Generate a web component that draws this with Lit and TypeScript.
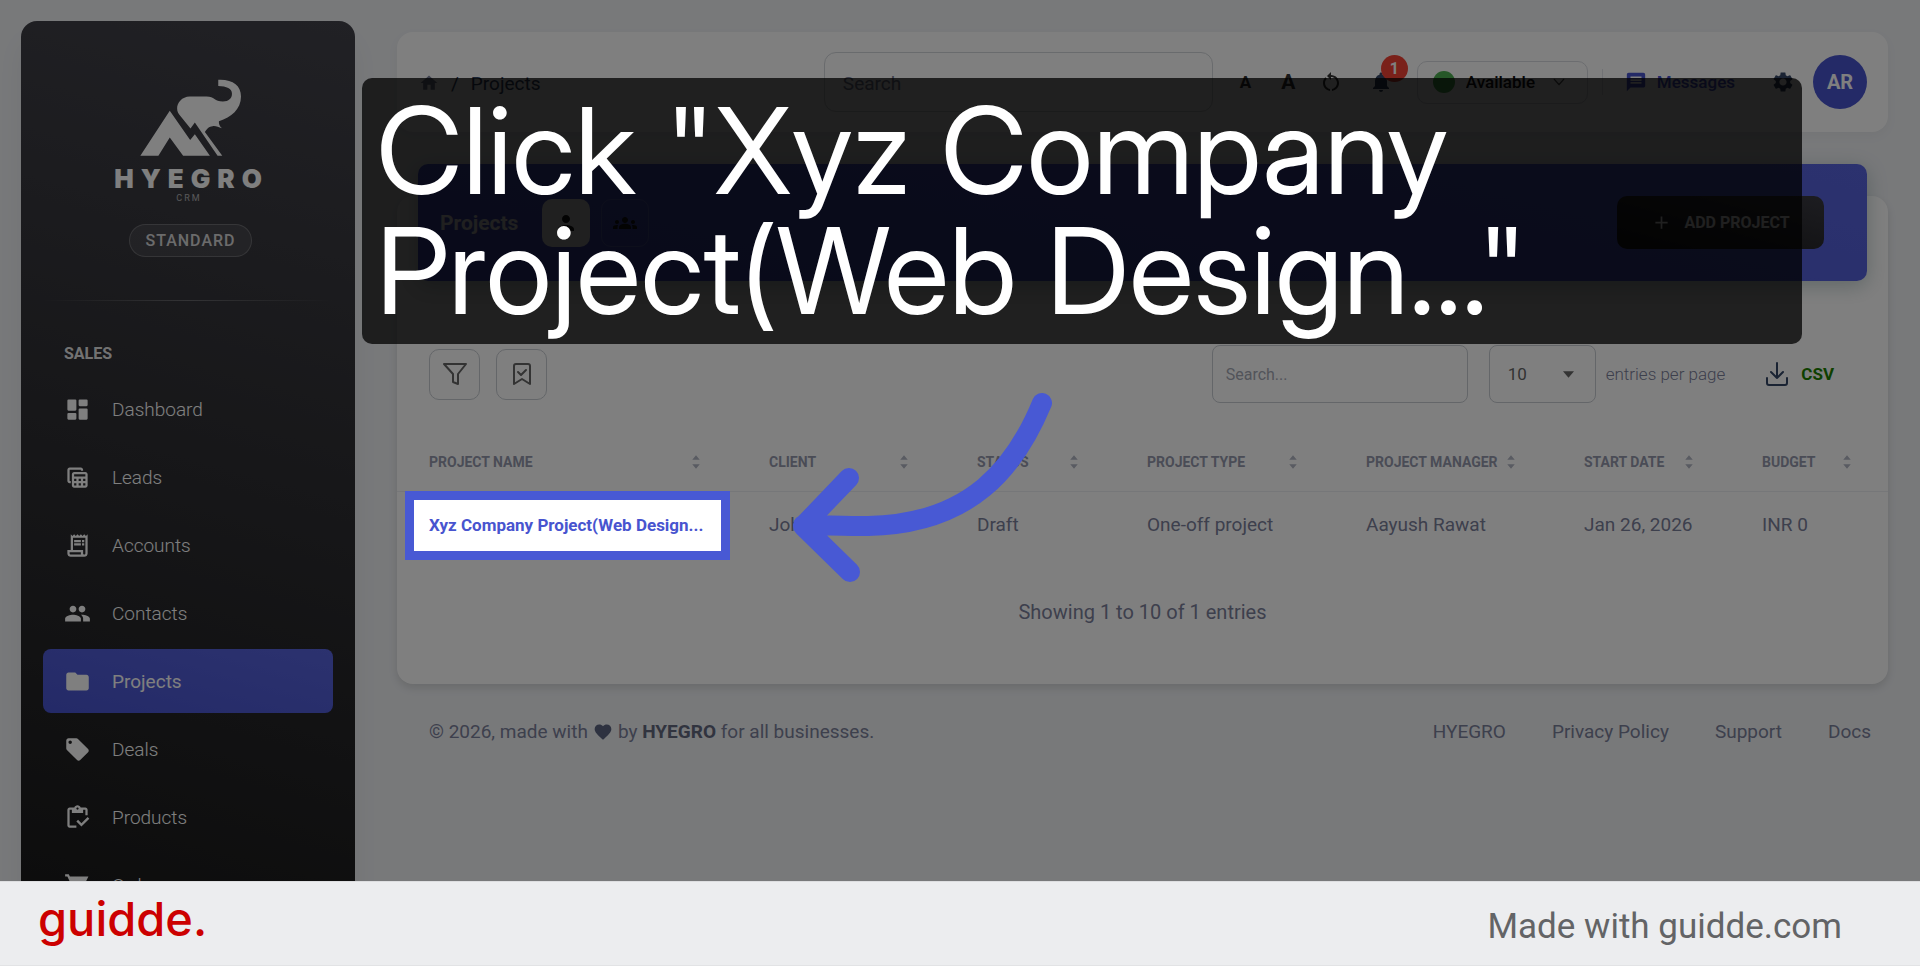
import { LitElement, html, css, svg } from "lit";
import { customElement } from "lit/decorators.js";
import { classMap } from "lit/directives/class-map.js";

const paths = {
  dashboard: svg`<path d="M4 3h6a1 1 0 0 1 1 1v8a1 1 0 0 1-1 1H4a1 1 0 0 1-1-1V4a1 1 0 0 1 1-1zm0 12h6a1 1 0 0 1 1 1v4a1 1 0 0 1-1 1H4a1 1 0 0 1-1-1v-4a1 1 0 0 1 1-1zm10-4h6a1 1 0 0 1 1 1v8a1 1 0 0 1-1 1h-6a1 1 0 0 1-1-1v-8a1 1 0 0 1 1-1zm0-8h6a1 1 0 0 1 1 1v4a1 1 0 0 1-1 1h-6a1 1 0 0 1-1-1V4a1 1 0 0 1 1-1z"/>`,
  leads: svg`<path fill-rule="evenodd" d="M19 7H9c-1.100 0-2 .9-2 2v10c0 1.100.9 2 2 2h10c1.100 0 2-.9 2-2V9c0-1.100-.9-2-2-2zm0 2v2H9V9h10zm-6 6v-2h2v2h-2zm2 2v2h-2v-2h2zm-4-2H9v-2h2v2zm6-2h2v2h-2v-2zm-8 4h2v2H9v-2zm8 2v-2h2v2h-2zM6 17H5c-1.100 0-2-.9-2-2V5c0-1.100.9-2 2-2h10c1.100 0 2 .9 2 2v1h-2V5H5v10h1v2z"/>`,
  accounts: svg`<path fill-rule="evenodd" d="M19.500 3.500 18 2l-1.500 1.500L15 2l-1.500 1.500L12 2l-1.500 1.500L9 2 7.500 3.500 6 2v14H3v3c0 1.660 1.340 3 3 3h12c1.660 0 3-1.340 3-3V2l-1.500 1.500zM15 20H6c-.55 0-1-.45-1-1v-1h10v2zm4-1c0 .55-.45 1-1 1s-1-.45-1-1v-3H8V5h11v14z"/><path d="M9 7h6v2H9zM16 7h2v2h-2zM9 10h6v2H9zM16 10h2v2h-2z"/>`,
  contacts: svg`<path d="M16 11c1.660 0 2.990-1.340 2.990-3S17.660 5 16 5c-1.660 0-3 1.340-3 3s1.340 3 3 3zm-8 0c1.660 0 2.990-1.340 2.990-3S9.660 5 8 5C6.340 5 5 6.340 5 8s1.340 3 3 3zm0 2c-2.330 0-7 1.170-7 3.500V19h14v-2.500c0-2.330-4.670-3.500-7-3.500zm8 0c-.29 0-.62.02-.97.05 1.160.84 1.970 1.970 1.970 3.450V19h6v-2.500c0-2.330-4.670-3.500-7-3.500z"/>`,
  projects: svg`<path d="M10 4H4c-1.100 0-1.990.9-1.990 2L2 18c0 1.100.9 2 2 2h16c1.100 0 2-.9 2-2V8c0-1.100-.9-2-2-2h-8l-2-2z"/>`,
  deals: svg`<path d="m21.410 11.580-9-9C12.050 2.220 11.550 2 11 2H4c-1.100 0-2 .9-2 2v7c0 .55.22 1.050.59 1.420l9 9c.36.36.86.58 1.410.58s1.050-.22 1.410-.59l7-7c.37-.36.59-.86.59-1.410s-.23-1.060-.59-1.420zM5.500 7C4.670 7 4 6.330 4 5.500S4.670 4 5.500 4 7 4.670 7 5.500 6.330 7 5.500 7z"/>`,
  products: svg`<path d="M5 5h2v3h10V5h2v5h2V5c0-1.100-.9-2-2-2h-4.180C14.400 1.840 13.300 1 12 1s-2.400.84-2.820 2H5c-1.100 0-2 .9-2 2v14c0 1.100.9 2 2 2h6v-2H5V5zm7-2c.55 0 1 .45 1 1s-.45 1-1 1-1-.45-1-1 .45-1 1-1z"/><path d="M21 11.500 15.510 17l-3.010-3-1.500 1.500 4.510 4.500L22.500 13z"/>`,
  orders: svg`<path d="M7 18c-1.100 0-1.990.9-1.990 2S5.900 22 7 22s2-.9 2-2-.9-2-2-2zM1 2v2h2l3.600 7.590-1.350 2.450C4.520 15.370 5.480 17 7 17h12v-2H7.420l1.130-2h7.450c.75 0 1.410-.41 1.750-1.030L21.700 4H5.210l-.94-2H1zm16 16c-1.100 0-1.990.9-1.990 2s.89 2 1.990 2 2-.9 2-2-.9-2-2-2z"/>`,
  home: svg`<path d="M10 20v-6h4v6h5v-8h3L12 3 2 12h3v8z"/>`,
  restart: svg`<path d="M12 5V2L8 6l4 4V7c3.310 0 6 2.690 6 6 0 2.970-2.170 5.430-5 5.910v2.020c3.950-.49 7-3.850 7-7.930 0-4.420-3.580-8-8-8zM6 13c0-1.650.67-3.150 1.760-4.240L6.340 7.340C4.900 8.790 4 10.790 4 13c0 4.080 3.050 7.440 7 7.930v-2.020c-2.830-.48-5-2.940-5-5.910z"/>`,
  bell: svg`<path d="M12 22c1.100 0 2-.9 2-2h-4c0 1.100.89 2 2 2zm6-6v-5c0-3.070-1.640-5.640-4.500-6.320V4c0-.83-.67-1.500-1.500-1.500s-1.500.67-1.500 1.500v.68C7.630 5.360 6 7.920 6 11v5l-2 2v1h16v-1l-2-2z"/>`,
  chat: svg`<path d="M20 2H4c-1.100 0-2 .9-2 2v18l4-4h14c1.100 0 2-.9 2-2V4c0-1.100-.9-2-2-2zm-2 12H6v-2h12v2zm0-3H6V9h12v2zm0-3H6V6h12v2z"/>`,
  gear: svg`<path d="M19.140 12.940c.04-.3.06-.61.06-.94 0-.32-.02-.64-.07-.94l2.030-1.580c.18-.14.23-.41.12-.61l-1.920-3.320c-.12-.22-.37-.29-.59-.22l-2.390.96c-.5-.38-1.030-.7-1.620-.94l-.36-2.540c-.04-.24-.24-.41-.48-.41h-3.840c-.24 0-.43.17-.47.41l-.36 2.540c-.59.24-1.130.57-1.620.94l-2.390-.96c-.22-.08-.47 0-.59.22L2.740 8.870c-.12.21-.08.47.12.61l2.030 1.580c-.05.3-.09.63-.09.94s.02.64.07.94l-2.030 1.580c-.18.14-.23.41-.12.61l1.920 3.320c.12.22.37.29.59.22l2.390-.96c.5.38 1.030.7 1.620.94l.36 2.540c.05.24.24.41.48.41h3.840c.24 0 .44-.17.47-.41l.36-2.540c.59-.24 1.130-.56 1.620-.94l2.390.96c.22.08.47 0 .59-.22l1.920-3.320c.12-.22.07-.47-.12-.61l-2.010-1.580zM12 15.600c-1.980 0-3.600-1.620-3.600-3.600s1.620-3.600 3.600-3.600 3.600 1.620 3.600 3.600-1.620 3.600-3.600 3.600z"/>`,
  person: svg`<path d="M12 12c2.210 0 4-1.790 4-4s-1.790-4-4-4-4 1.790-4 4 1.790 4 4 4zm0 2c-2.670 0-8 1.340-8 4v2h16v-2c0-2.660-5.330-4-8-4z"/>`,
  groups: svg`<path d="M12 12.750c1.630 0 3.070.39 4.240.9 1.080.48 1.760 1.560 1.760 2.730V18H6v-1.610c0-1.180.68-2.260 1.760-2.730 1.170-.52 2.610-.91 4.240-.91zM4 13c1.100 0 2-.9 2-2s-.9-2-2-2-2 .9-2 2 .9 2 2 2zm1.130 1.100C4.760 14.040 4.390 14 4 14c-.99 0-1.930.21-2.780.58C.48 14.900 0 15.620 0 16.430V18h4.500v-1.610c0-.83.23-1.610.63-2.290zM20 13c1.100 0 2-.9 2-2s-.9-2-2-2-2 .9-2 2 .9 2 2 2zm4 3.430c0-.81-.48-1.530-1.220-1.850-.85-.37-1.790-.58-2.780-.58-.39 0-.76.04-1.130.1.400.68.63 1.460.63 2.290V18H24v-1.570zM12 6c1.660 0 3 1.340 3 3s-1.340 3-3 3-3-1.340-3-3 1.340-3 3-3z"/>`,
  plus: svg`<path d="M19 13h-6v6h-2v-6H5v-2h6V5h2v6h6z"/>`,
  heart: svg`<path d="m12 21.350-1.450-1.320C5.400 15.360 2 12.280 2 8.500 2 5.420 4.420 3 7.500 3c1.740 0 3.410.81 4.500 2.090C13.090 3.810 14.760 3 16.500 3 19.580 3 22 5.420 22 8.500c0 3.780-3.400 6.860-8.550 11.540L12 21.350z"/>`,
  sort: svg`<path d="M7 9l5-6 5 6zM7 15l5 6 5-6z"/>`,
  caret: svg`<path d="M5 8h14l-7 8z"/>`,
};

const lines = {
  chevron: svg`<path d="M5 8l7 8 7-8"/>`,
  filter: svg`<path d="M1 2h22l-8 10v10l-5-2v-8z"/>`,
  bookmark: svg`<path d="M4 22V4a2 2 0 0 1 2-2h12a2 2 0 0 1 2 2v18l-8-5z"/><path d="m8 10 3 3 5-5"/>`,
  download: svg`<path d="M12 1v15M6 10l6 6 6-6M2 16v5a2 2 0 0 0 2 2h16a2 2 0 0 0 2-2v-5"/>`,
};

const icon = (name: keyof typeof paths) =>
  html`<svg class="icon ${name}" viewBox="0 0 24 24" aria-hidden="true">${paths[name]}</svg>`;
const line = (name: keyof typeof lines) =>
  html`<svg class="line ${name}" viewBox="0 0 24 24" aria-hidden="true">${lines[name]}</svg>`;

const base = css`
  * { box-sizing: border-box; }
  button, input, select { font: inherit; color: inherit; margin: 0; }
  button { padding: 0; border: 0; background: none; display: flex; align-items: center; justify-content: center; }
  a { color: inherit; text-decoration: none; }
  .icon { width: 24px; height: 24px; fill: currentColor; flex: none; display: block; }
  .line { width: 24px; height: 24px; fill: none; stroke: currentColor; stroke-width: 2; stroke-linejoin: round; stroke-linecap: round; flex: none; display: block; }
`;

@customElement("side-nav")
class SideNav extends LitElement {
  static styles = [base, css`
    :host { display: flex; flex-direction: column; width: 334px; min-height: 100%; padding: 58px 22px 0; border-radius: 16px; background: linear-gradient(195deg, #42424a, #191919); box-shadow: 0 20px 27px rgba(0, 0, 0, 0.05); color: #fff; }
    .brand { display: flex; flex-direction: column; align-items: center; }
    .mark { width: 101px; height: 77px; fill: #fff; margin-left: 4px; }
    .name { font: 900 26px/26px Inter, sans-serif; letter-spacing: 7px; margin: 10px 0 0 7px; }
    .sub { font-size: 9px; line-height: 10px; letter-spacing: 2px; margin: 1px 0 0 2px; opacity: 0.6; }
    .plan { font-size: 16px; font-weight: 500; line-height: 31px; letter-spacing: 1px; color: rgba(255, 255, 255, 0.8); border: 1px solid rgba(255, 255, 255, 0.2); background: rgba(255, 255, 255, 0.08); border-radius: 17px; padding: 0 15px; margin: 21px 0 0 5px; }
    .rule { height: 1px; margin: 43px 0 0; background: linear-gradient(90deg, transparent, rgba(255, 255, 255, 0.25), transparent); }
    h2 { font-size: 16px; line-height: 24px; font-weight: 700; margin: 41px 0 11px 21px; color: rgba(255, 255, 255, 0.9); }
    ul { list-style: none; margin: 0; padding: 0; display: flex; flex-direction: column; gap: 4px; }
    a { display: flex; align-items: center; gap: 21px; height: 64px; padding-left: 21px; border-radius: 8px; font-size: 19px; font-weight: 300; }
    .icon { width: 27px; height: 27px; }
    .active { background: linear-gradient(195deg, #5864de, #4854cf); font-weight: 400; }
  `];

  items: [keyof typeof paths, string][] = [
    ["dashboard", "Dashboard"], ["leads", "Leads"], ["accounts", "Accounts"], ["contacts", "Contacts"],
    ["projects", "Projects"], ["deals", "Deals"], ["products", "Products"], ["orders", "Orders"],
  ];

  render() {
    return html`
      <div class="brand">
        <svg class="mark" viewBox="423 236 302 230" aria-hidden="true">
          <path d="M512 331 573 418 587 401 632 465H552L512 411 478 465H424Z"/>
          <path d="M574 384 587 366 655 465H669L617 394C622 386 630 377 640 377 650 375 657 381 668 383 661 377 658 369 659 362 696 350 725 326 725 288 725 255 700 236 657 238V257C682 258 698 264 698 280 698 294 688 303 671 303 645 303 646 288 622 288H572C548 289 534 306 534 324 534 334 538 340 545 348Z"/>
        </svg>
        <div class="name">HYEGRO</div>
        <div class="sub">CRM</div>
        <div class="plan">STANDARD</div>
      </div>
      <div class="rule"></div>
      <h2>SALES</h2>
      <ul>
        ${this.items.map(([name, label]) => html`
          <li><a href="#" class=${classMap({ active: name === "projects" })}>${icon(name)}<span>${label}</span></a></li>`)}
      </ul>`;
  }
}

@customElement("top-bar")
class TopBar extends LitElement {
  static styles = [base, css`
    :host { display: flex; align-items: center; height: 100px; padding: 0 21px 0 22px; border-radius: 16px; background: #fff; color: #344767; box-shadow: 0 4px 12px rgba(0, 0, 0, 0.04); }
    .crumbs { flex: 1; display: flex; align-items: center; gap: 12px; font-size: 19px; color: #344767; padding-top: 2px; }
    .crumbs .icon { width: 20px; height: 20px; color: #7b809a; }
    .search { width: 389px; height: 60px; border: 1px solid #d2d6da; border-radius: 12px; background: none; padding: 2px 18px 0; font-size: 19px; }
    .search::placeholder { color: #7b809a; opacity: 1; }
    .tools { display: flex; margin-left: 11px; color: #344767; }
    .tools button { width: 43px; height: 44px; font-weight: 700; color: #333; }
    .small { font-size: 17px; }
    .big { font-size: 21px; }
    .tools .alerts { position: relative; margin-left: 7px; color: #344767; }
    .badge { position: absolute; left: 21px; top: -5px; width: 27px; height: 27px; border-radius: 50%; background: #f44335; color: #fff; font-size: 16px; line-height: 27px; text-align: center; }
    .status { position: relative; display: flex; align-items: center; width: 171px; height: 43px; margin-left: 14px; border: 1px solid #d9dbe0; border-radius: 10px; color: #111; padding-left: 15px; }
    .dot { width: 22px; height: 22px; border-radius: 50%; background: #4caf50; }
    .status select { appearance: none; border: 0; background: none; flex: 1; padding: 0 0 0 11px; font-size: 17px; font-weight: 500; height: 40px; }
    .chevron { width: 16px; height: 16px; position: absolute; right: 20px; color: #555; pointer-events: none; }
    .sep { width: 1px; height: 26px; background: #e3e5ea; margin: 0 22px 0 14px; }
    .messages { display: flex; align-items: center; gap: 10px; color: #4854cf; font-size: 17px; font-weight: 500; }
    .messages .icon { width: 22px; height: 22px; }
    .settings { margin: 0 18px 0 36px; color: #344767; }
    .avatar { width: 54px; height: 54px; border-radius: 50%; background: #4854cf; color: #fff; font-size: 20px; font-weight: 700; }
  `];

  render() {
    return html`
      <nav class="crumbs" aria-label="Breadcrumb">
        <a href="#" aria-label="Home">${icon("home")}</a><span>/</span><span>Projects</span>
      </nav>
      <input class="search" type="search" placeholder="Search" aria-label="Search">
      <div class="tools">
        <button class="small" aria-label="Smaller text">A</button>
        <button class="big" aria-label="Larger text">A</button>
        <button aria-label="Reset text size">${icon("restart")}</button>
        <button class="alerts" aria-label="Notifications">${icon("bell")}<span class="badge">1</span></button>
      </div>
      <div class="status">
        <span class="dot"></span>
        <select aria-label="Status"><option>Available</option></select>
        ${line("chevron")}
      </div>
      <span class="sep"></span>
      <a class="messages" href="#">${icon("chat")}Messages</a>
      <button class="settings" aria-label="Settings">${icon("gear")}</button>
      <button class="avatar">AR</button>`;
  }
}

@customElement("project-list")
class ProjectList extends LitElement {
  static styles = [base, css`
    :host { display: block; margin-top: 64px; border-radius: 16px; background: #fff; box-shadow: 0 4px 8px rgba(0, 0, 0, 0.12); color: #7b809a; font-size: 19px; }
    .banner { position: relative; top: -32px; display: flex; align-items: center; height: 117px; margin: 0 21px -32px; padding: 0 43px 0 22px; border-radius: 10px; background: linear-gradient(195deg, #5864de, #4854cf); box-shadow: 0 5px 20px rgba(0, 60, 60, 0.25); color: #fff; }
    h1 { font-size: 21px; font-weight: 700; margin: 0 24px 0 0; }
    .scope { width: 48px; height: 48px; border-radius: 10px; margin-right: 11px; color: #1a1a1a; border: 1px solid rgba(255, 255, 255, 0.2); }
    .scope.on { background: #fff; }
    .add { width: 207px; height: 53px; margin-left: auto; border-radius: 10px; gap: 12px; background: linear-gradient(195deg, #3a3a42, #191919); font-size: 16px; font-weight: 700; }
    .add .icon { width: 21px; height: 21px; }
    .toolbar { display: flex; align-items: center; height: 58px; margin: 64px 54px 29px 32px; }
    .tool { width: 51px; height: 51px; margin-right: 16px; border: 1px solid #c8ccd2; border-radius: 10px; color: #666; }
    .find { width: 256px; height: 58px; margin: 0 21px 0 auto; padding: 0 13px; border: 1px solid #c8ccd2; border-radius: 8px; background: none; font-size: 16px; }
    .find::placeholder { color: #a4a8b4; opacity: 1; }
    .size { position: relative; display: flex; align-items: center; width: 107px; height: 58px; border: 1px solid #c8ccd2; border-radius: 8px; color: #666; font-size: 17px; }
    .size select { appearance: none; border: 0; background: none; width: 100%; height: 100%; padding: 0 18px; }
    .caret { width: 19px; height: 19px; position: absolute; right: 17px; pointer-events: none; }
    .per { margin: 0 40px 0 10px; font-size: 17px; font-weight: 300; }
    .csv { gap: 12px; color: #1d8000; font-size: 17px; font-weight: 700; }
    .csv .line { color: #344767; }
    table { width: 100%; border-collapse: collapse; table-layout: fixed; }
    .c1 { width: 340px; } .c2 { width: 208px; } .c3 { width: 170px; } .c4 { width: 219px; } .c5 { width: 218px; } .c6 { width: 178px; } .c7 { width: 158px; }
    th { height: 59px; padding: 2px 32px 0; border-bottom: 1px solid #eceef2; font-size: 14px; font-weight: 700; text-align: left; color: #9599ad; white-space: nowrap; }
    th div { display: flex; justify-content: space-between; align-items: center; }
    .sort { width: 18px; height: 18px; color: #b3b6c4; }
    td { height: 68px; padding: 0 0 2px 32px; white-space: nowrap; }
    td a { color: #4854cf; font-weight: 700; font-size: 17px; }
    .summary { margin: 0; padding: 39px 0 58px; text-align: center; line-height: 28px; font-size: 20px; }
  `];

  columns = ["Project name", "Client", "Status", "Project type", "Project manager", "Start date", "Budget"];
  row = ["John", "Draft", "One-off project", "Aayush Rawat", "Jan 26, 2026", "INR 0"];

  render() {
    return html`
      <div class="banner">
        <h1>Projects</h1>
        <button class="scope on" aria-label="My projects">${icon("person")}</button>
        <button class="scope" aria-label="Team projects">${icon("groups")}</button>
        <button class="add">${icon("plus")}ADD PROJECT</button>
      </div>
      <div class="toolbar">
        <button class="tool" aria-label="Filter">${line("filter")}</button>
        <button class="tool" aria-label="Saved filters">${line("bookmark")}</button>
        <input class="find" type="search" placeholder="Search..." aria-label="Search projects">
        <span class="size"><select id="size"><option>10</option></select>${icon("caret")}</span>
        <label class="per" for="size">entries per page</label>
        <button class="csv">${line("download")}CSV</button>
      </div>
      <table>
        <colgroup>${this.columns.map((_, i) => html`<col class="c${i + 1}">`)}</colgroup>
        <thead><tr>${this.columns.map((c) => html`<th scope="col"><div>${c.toUpperCase()}${icon("sort")}</div></th>`)}</tr></thead>
        <tbody><tr><td><a href="#">Xyz Company Project(Web Design...</a></td>${this.row.map((c) => html`<td>${c}</td>`)}</tr></tbody>
      </table>
      <p class="summary">Showing 1 to 10 of 1 entries</p>`;
  }
}

@customElement("app-root")
class AppRoot extends LitElement {
  static styles = [base, css`
    :host { display: flex; flex-direction: column; height: 100vh; font-family: Roboto, sans-serif; background: #f0f2f5; }
    .stage { flex: 1; min-height: 0; position: relative; display: flex; align-items: flex-start; gap: 42px; padding: 21px 32px 0 21px; overflow: hidden; }
    side-nav { flex: none; }
    main { flex: 1; min-width: 0; padding-top: 11px; }
    .foot { display: flex; align-items: center; justify-content: space-between; margin: 34px 17px 0 32px; font-size: 19px; line-height: 28px; color: #7b809a; }
    .foot p { margin: 0; display: flex; align-items: center; gap: 5px; white-space: pre; }
    .foot .icon { width: 20px; height: 20px; color: #5c6580; }
    .foot b { color: #63687f; }
    .links { display: flex; gap: 46px; }
    .spotlight { position: absolute; left: 405px; top: 491px; width: 325px; height: 69px; border: 9px solid #4859d4; box-shadow: 0 0 0 3000px rgba(0, 0, 0, 0.5); }
    .callout { position: absolute; left: 362px; top: 78px; width: 75%; margin: 0; padding: 13px 14px; border-radius: 10px; background: rgba(0, 0, 0, 0.75); color: #fff; font: 400 120px/120px "Inter Display", Inter, sans-serif; font-variation-settings: "opsz" 32; }
    .callout span { display: block; white-space: nowrap; }
    .arrow { position: absolute; left: 780px; top: 380px; width: 290px; height: 210px; fill: none; stroke: #4859d4; stroke-width: 20; stroke-linecap: round; stroke-linejoin: round; }
    .credit { flex: none; display: flex; align-items: center; justify-content: space-between; height: 85px; padding: 0 78px 0 38px; background: #ecedef; border-top: 1px solid #dddee0; border-bottom: 1px solid #e2e3e5; color: #636466; font-size: 35px; }
    .logo { font: 500 47px/60px Inter, sans-serif; color: #c00; padding-bottom: 9px; }
    .made { padding-top: 6px; }
  `];

  render() {
    return html`
      <div class="stage">
        <side-nav></side-nav>
        <main>
          <top-bar></top-bar>
          <project-list></project-list>
          <footer class="foot">
            <p>© 2026, made with${icon("heart")}<span>by <b>HYEGRO</b> for all businesses.</span></p>
            <nav class="links"><a href="#">HYEGRO</a><a href="#">Privacy Policy</a><a href="#">Support</a><a href="#">Docs</a></nav>
          </footer>
        </main>
        <div class="spotlight"></div>
        <p class="callout"><span>Click "Xyz Company</span><span>Project(Web Design..."</span></p>
        <svg class="arrow" viewBox="780 380 290 210" aria-hidden="true">
          <path d="M1042 403C1016 466 972 524 868 526 845 526 820 525 803 525M849 478 803 526 850 572"/>
        </svg>
      </div>
      <div class="credit"><a class="logo" href="#">guidde.</a><span class="made">Made with guidde.com</span></div>`;
  }
}
